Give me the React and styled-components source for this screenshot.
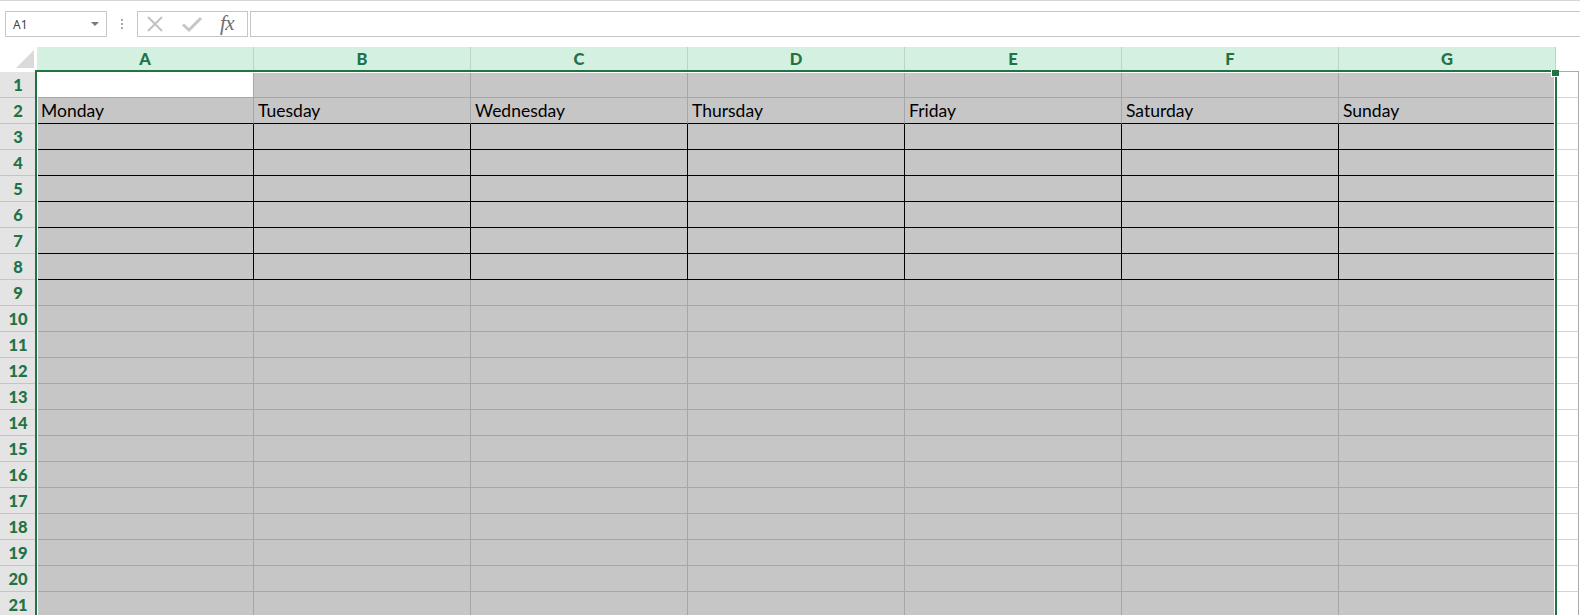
import React from "react";
import styled, { createGlobalStyle } from "styled-components";

const GREEN = "#217346";

const GlobalStyle = createGlobalStyle`
  html, body { margin: 0; padding: 0; background: #fff; overflow: hidden; }
  body { font-family: Lato, "Liberation Sans", sans-serif; }
  * { box-sizing: border-box; }
`;

const Page = styled.div`
  width: 1580px;
  height: 615px;
  overflow: hidden;
  display: flex;
  flex-direction: column;
  background: #fff;
`;

const FormulaBar = styled.div`
  height: 47px;
  flex: none;
  border-top: 1px solid #d6d6d6;
  padding: 10px 0 0 5px;
  display: flex;
  align-items: flex-start;
`;

const NameBox = styled.div`
  width: 102px;
  height: 26px;
  border: 1px solid #c6c6c6;
  display: flex;
  align-items: center;
  justify-content: space-between;
  padding: 0 7px 0 7px;
  font-family: "Noto Sans", "Open Sans", sans-serif;
  font-size: 12px;
  color: #444;
`;

const Caret = styled.span`
  width: 0;
  height: 0;
  border-left: 4px solid transparent;
  border-right: 4px solid transparent;
  border-top: 4px solid #7b7b7b;
`;

const Dots = styled.div`
  margin-left: 14px;
  height: 26px;
  width: 2px;
  display: flex;
  flex-direction: column;
  justify-content: center;
  gap: 2px;
`;

const Dot = styled.span`
  width: 2px;
  height: 2px;
  background: #a8a8a8;
`;

const FxBox = styled.div`
  margin-left: 14px;
  width: 111px;
  height: 26px;
  border: 1px solid #c6c6c6;
  display: flex;
  align-items: center;
  padding-left: 8px;
`;

const IconSlot = styled.span`
  display: flex;
  align-items: center;
  justify-content: center;
  width: ${(p) => p.$w}px;
  margin-left: ${(p) => p.$gap || 0}px;
  height: 24px;
`;

const FxText = styled.span`
  font-family: "Liberation Serif", "DejaVu Serif", serif;
  font-style: italic;
  font-size: 21px;
  color: #6e6e6e;
  line-height: 24px;
  margin-left: 17px;
  margin-top: -2px;
  letter-spacing: -0.5px;
`;

const FormulaInput = styled.div`
  margin-left: 2px;
  flex: 1;
  height: 26px;
  border: 1px solid #c6c6c6;
  border-right: none;
`;

const Sheet = styled.div`
  position: relative;
  flex: 1;
  display: grid;
  grid-template-columns: 37px repeat(7, 217px) 23px 1fr;
  grid-template-rows: 25px;
  grid-auto-rows: 26px;
  overflow: hidden;
`;

const Corner = styled.div`
  background: #fff;
  display: flex;
  justify-content: flex-end;
  align-items: flex-end;
  padding: 0 3px 4px 0;
`;

const CornerTriangle = styled.span`
  width: 18px;
  height: 18px;
  background: #dadada;
  clip-path: polygon(100% 0, 100% 100%, 0 100%);
`;

const ColHeader = styled.div`
  background: #d3f0e0;
  border-right: 1px solid #bfd3c7;
  border-bottom: 1px solid ${GREEN};
  display: flex;
  align-items: center;
  justify-content: center;
  font-family: Lato, "Open Sans", sans-serif;
  font-weight: 900;
  font-size: 16.5px;
  color: ${GREEN};
`;

const BlankHeader = styled.div`
  background: #fff;
  border-bottom: 1px solid ${(p) => (p.$line ? "#ababab" : "transparent")};
`;

const RowHeader = styled.div`
  background: #e4e4e4;
  border-bottom: 1px solid #c4c4c4;
  display: flex;
  align-items: center;
  justify-content: center;
  padding-right: 1px;
  font-family: Lato, "Open Sans", sans-serif;
  font-weight: 900;
  font-size: 16.5px;
  color: ${GREEN};
`;

const Cell = styled.div`
  background: ${(p) => (p.$white ? "#fff" : "#c6c6c6")};
  border-right: 1px solid ${(p) => p.$right};
  border-bottom: 1px solid ${(p) => p.$bottom};
  display: flex;
  align-items: flex-end;
  padding: 0 0 2px 4px;
  font-family: Lato, "Liberation Sans", sans-serif;
  font-size: 17.5px;
  line-height: 21px;
  color: #000;
  white-space: nowrap;
  overflow: hidden;
`;

const SpareCell = styled.div`
  background: #fff;
  border-right: 1px solid ${(p) => (p.$edge ? "#ababab" : "transparent")};
  border-bottom: 1px solid ${(p) => (p.$edge ? "#d4d4d4" : "transparent")};
`;

const Selection = styled.div`
  position: absolute;
  left: 35px;
  top: 23px;
  width: 1522px;
  height: 700px;
  border: 2px solid ${GREEN};
  box-shadow: inset 0 0 0 1px #fff;
  pointer-events: none;
`;

const FillHandle = styled.div`
  position: absolute;
  left: 1551px;
  top: 23px;
  width: 8px;
  height: 7px;
  background: ${GREEN};
  border-left: 1px solid #fff;
  border-bottom: 1px solid #fff;
`;

const COLS = ["A", "B", "C", "D", "E", "F", "G"];
const DAYS = ["Monday", "Tuesday", "Wednesday", "Thursday", "Friday", "Saturday", "Sunday"];
const ROWS = Array.from({ length: 21 }, (_, i) => i + 1);

const GRID = "#a6a6a6";
const BLACK = "#000";

function cellBorders(row) {
  if (row === 2) return { right: GRID, bottom: BLACK };
  if (row >= 3 && row <= 8) return { right: BLACK, bottom: BLACK };
  return { right: GRID, bottom: GRID };
}

const CancelIcon = () => (
  <svg width="18" height="18" viewBox="0 0 18 18">
    <path d="M2 2 L16 16 M16 2 L2 16" stroke="#c2c2c2" strokeWidth="2" fill="none" />
  </svg>
);

const EnterIcon = () => (
  <svg width="22" height="18" viewBox="0 0 22 18">
    <path d="M2 9.5 L8 15 L20 3" stroke="#c6c6c6" strokeWidth="3" fill="none" />
  </svg>
);

export default function App() {
  return (
    <Page>
      <GlobalStyle />
      <FormulaBar>
        <NameBox>
          <span>A1</span>
          <Caret />
        </NameBox>
        <Dots>
          <Dot />
          <Dot />
          <Dot />
        </Dots>
        <FxBox>
          <IconSlot $w={18}>
            <CancelIcon />
          </IconSlot>
          <IconSlot $w={22} $gap={17}>
            <EnterIcon />
          </IconSlot>
          <FxText>fx</FxText>
        </FxBox>
        <FormulaInput />
      </FormulaBar>
      <Sheet>
        <Corner>
          <CornerTriangle />
        </Corner>
        {COLS.map((c) => (
          <ColHeader key={c}>{c}</ColHeader>
        ))}
        <BlankHeader $line />
        <BlankHeader />
        {ROWS.map((r) => {
          const b = cellBorders(r);
          return (
            <React.Fragment key={r}>
              <RowHeader>{r}</RowHeader>
              {COLS.map((c, ci) => (
                <Cell
                  key={c}
                  $white={r === 1 && ci === 0}
                  $right={r === 1 ? GRID : b.right}
                  $bottom={b.bottom}
                >
                  {r === 2 ? DAYS[ci] : ""}
                </Cell>
              ))}
              <SpareCell $edge />
              <SpareCell />
            </React.Fragment>
          );
        })}
        <Selection />
        <FillHandle />
      </Sheet>
    </Page>
  );
}
